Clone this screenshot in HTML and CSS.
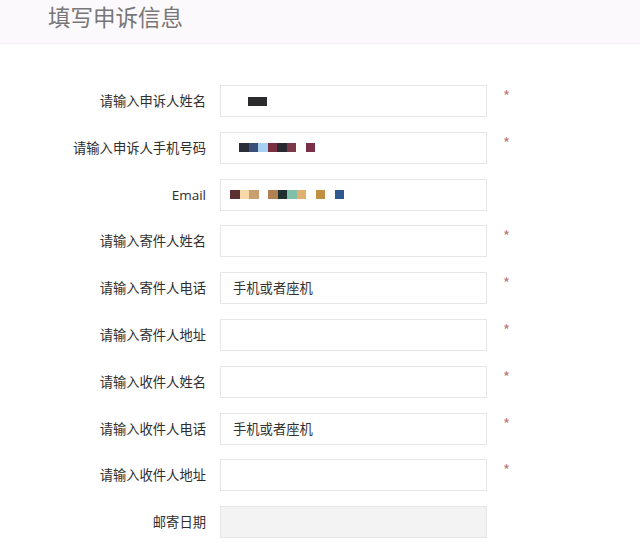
FILE: index.html
```html
<!DOCTYPE html>
<html lang="zh">
<head>
<meta charset="utf-8">
<title>填写申诉信息</title>
<link rel="stylesheet" href="styles.css">
</head>
<body>
<header class="head"><h1 class="title">填写申诉信息</h1></header>
<form class="form">
  <div class="row"><label class="lab">请输入申诉人姓名</label><div class="field"><span class="px first"><i style="background:#2b2b2e"></i><i style="background:#2b2b2e"></i></span></div><span class="req">*</span></div>
  <div class="row"><label class="lab">请输入申诉人手机号码</label><div class="field"><span class="px second"><i style="background:#2a2d3a"></i><i style="background:#3a5078"></i><i style="background:#a8d0f0"></i><i style="background:#7a3040"></i><i style="background:#2a2a30"></i><i style="background:#7a3a48"></i><b></b><i style="background:#7a3048"></i></span></div><span class="req">*</span></div>
  <div class="row"><label class="lab en">Email</label><div class="field"><span class="px third"><i style="background:#5a3030"></i><i style="background:#f8d8a8"></i><i style="background:#c8a070"></i><b></b><i style="background:#b08050"></i><i style="background:#203030"></i><i style="background:#80c0a8"></i><i style="background:#e0b070"></i><b></b><i style="background:#c09040"></i><b></b><i style="background:#305890"></i></span></div><span class="req"></span></div>
  <div class="row"><label class="lab">请输入寄件人姓名</label><div class="field"></div><span class="req">*</span></div>
  <div class="row"><label class="lab">请输入寄件人电话</label><div class="field">手机或者座机</div><span class="req">*</span></div>
  <div class="row"><label class="lab">请输入寄件人地址</label><div class="field"></div><span class="req">*</span></div>
  <div class="row"><label class="lab">请输入收件人姓名</label><div class="field"></div><span class="req">*</span></div>
  <div class="row"><label class="lab">请输入收件人电话</label><div class="field">手机或者座机</div><span class="req">*</span></div>
  <div class="row"><label class="lab">请输入收件人地址</label><div class="field"></div><span class="req">*</span></div>
  <div class="row"><label class="lab">邮寄日期</label><div class="field disabled"></div><span class="req"></span></div>
</form>
</body>
</html>
```
FILE: styles.css
```css
html, body {
  margin: 0;
  padding: 0;
  background: #ffffff;
  font-family: "Noto Sans CJK SC", "Open Sans", sans-serif;
  color: #333;
}
.head {
  height: 44px;
  background: #fcf9fc;
  border-bottom: 1px solid #f4f0f4;
  box-sizing: border-box;
  display: flex;
  align-items: center;
  padding-left: 48px;
}
.title {
  margin: 0;
  font-size: 22.5px;
  font-weight: 400;
  color: #777;
  line-height: 1;
  position: relative;
  top: -5px;
}
.form {
  display: flex;
  flex-direction: column;
  gap: 14.8px;
  padding-top: 41px;
}
.row {
  display: grid;
  grid-template-columns: 206px 267px 30px;
  column-gap: 14px;
  align-items: start;
  height: 32px;
}
.lab {
  text-align: right;
  font-size: 13.3px;
  line-height: 32px;
  color: #2e2e2e;
}
.lab.en {
  font-family: "Open Sans", sans-serif;
  font-size: 13.5px;
}
.field {
  height: 32px;
  box-sizing: border-box;
  border: 1px solid #e6e6e6;
  background: #fff;
  font-size: 13.3px;
  line-height: 30px;
  padding-left: 12px;
  color: #333;
}
.field.disabled {
  background: #f3f3f3;
}
.req {
  color: #c07878;
  font-size: 15px;
  line-height: 1;
  padding-top: 3px;
  padding-left: 2px;
}
.px {
  display: flex;
  height: 30px;
  align-items: center;
}
.px i, .px b {
  display: block;
  width: 9.5px;
  height: 9px;
}
.px.first { padding-left: 15px; }
.px.second { padding-left: 6px; }
.px.third { margin-left: -3px; }
```
